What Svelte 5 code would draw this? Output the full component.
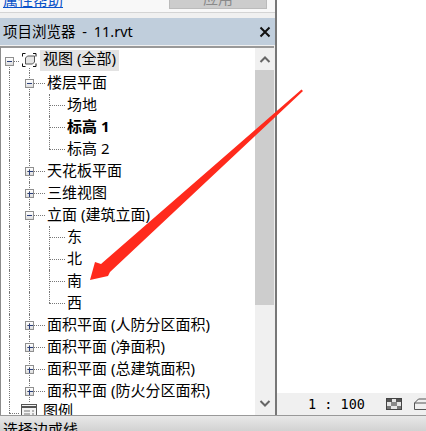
<script>
	const L = 'line', E = 'elbow', Z = 'end', M = 'minus', P = 'plus';
	const rows = [
		{ cells: [M], icon: 'view', label: '视图 (全部)', active: true, first: true },
		{ cells: [L, M], label: '楼层平面' },
		{ cells: [L, L, E], label: '场地' },
		{ cells: [L, L, E], label: '标高 1', bold: true },
		{ cells: [L, L, Z], label: '标高 2' },
		{ cells: [L, P], label: '天花板平面' },
		{ cells: [L, P], label: '三维视图' },
		{ cells: [L, M], label: '立面 (建筑立面)' },
		{ cells: [L, L, E], label: '东' },
		{ cells: [L, L, E], label: '北' },
		{ cells: [L, L, E], label: '南' },
		{ cells: [L, L, Z], label: '西' },
		{ cells: [L, P], label: '面积平面 (人防分区面积)' },
		{ cells: [L, P], label: '面积平面 (净面积)' },
		{ cells: [L, P], label: '面积平面 (总建筑面积)' },
		{ cells: [L, P], label: '面积平面 (防火分区面积)' },
		{ cells: [Z], icon: 'legend', label: '图例' }
	];
</script>

<div class="app">
	<div class="work">
		<section class="browser">
			<div class="props">
				<span class="help">属性帮助</span>
				<span class="apply"><span>应用</span></span>
			</div>
			<header class="title">
				<span class="name">项目浏览器 - 11.rvt</span>
				<svg class="close" width="12" height="12" viewBox="0 0 12 12">
					<path d="M1.500 1.500l9 9M10.500 1.500l-9 9" stroke="#111" stroke-width="2" fill="none" />
				</svg>
			</header>
			<div class="pane">
				<ul class="tree">
					{#each rows as row}
						<li class="row">
							{#each row.cells as c}
								<span class="cell {c}" class:first={row.first}>
									{#if c === M || c === P}
										<i class="box" class:plus={c === P}></i>
									{/if}
								</span>
							{/each}
							{#if row.icon === 'view'}
								<svg class="icon" width="20" height="20" viewBox="0 0 20 20" fill="none">
									<path d="M3.500 5.500v-3h3M14 2.500h3v3M17 12.500v3h-3M6.500 15.500h-3v-3" stroke="#111" />
									<path d="M6.500 7l2-2h7v6l-2 2h-7z" fill="#e6e6e6" stroke="#555" />
									<path d="M10.500 17v3" stroke="#777" stroke-dasharray="1 1" />
								</svg>
							{:else if row.icon === 'legend'}
								<svg class="icon" width="20" height="20" viewBox="0 0 20 20" fill="none">
									<rect x="2.500" y="1.500" width="15" height="15" fill="#f4f4f4" stroke="#555" />
									<path d="M3 4h14" stroke="#555" stroke-width="2" />
									<path d="M5 8h6M13 8h2M5 11h6M13 11h2" stroke="#777" />
								</svg>
							{/if}
							<span class="label" class:active={row.active} class:bold={row.bold} class:top={row.icon}>{row.label}</span>
						</li>
					{/each}
				</ul>
				<div class="scroll">
					<span class="arrow">
						<svg width="14" height="10" viewBox="0 0 14 10" fill="none">
							<path d="M2.500 8L7 3.500 11.500 8" stroke="#666" stroke-width="2" />
						</svg>
					</span>
					<span class="thumb"></span>
					<span class="track"></span>
					<span class="arrow">
						<svg width="14" height="10" viewBox="0 0 14 10" fill="none">
							<path d="M2.500 2L7 6.500 11.500 2" stroke="#666" stroke-width="2" />
						</svg>
					</span>
				</div>
			</div>
		</section>
		<section class="canvas">
			<div class="drawing"></div>
			<div class="viewbar">
				<span class="scale">1 : 100</span>
				<svg width="16" height="12" viewBox="0 0 16 12">
					<rect x="0.500" y="0.500" width="15" height="11" fill="#e4e4e4" stroke="#444" />
					<rect x="1" y="1" width="5" height="3" fill="#555" />
					<rect x="10" y="1" width="5" height="3" fill="#555" />
					<rect x="5" y="4" width="6" height="4" fill="#888" />
					<rect x="1" y="8" width="4" height="3" fill="#777" />
					<rect x="11" y="8" width="4" height="3" fill="#777" />
				</svg>
				<svg class="cube" width="16" height="12" viewBox="0 0 16 12" fill="none">
					<path d="M0.500 11.500V5l4-4h11M0.500 5H16M0.500 11.500H16" stroke="#555" />
				</svg>
			</div>
		</section>
	</div>
	<footer class="status">选择边或线</footer>
	<svg class="pointer" width="426" height="431" viewBox="0 0 426 431">
		<path d="M301.500 89.500L303 91 110 272 108 276 90 280 95 262 101 264z" fill="#ff2a1c" />
	</svg>
</div>

<style>
	:global(body) {
		margin: 0;
		background: #fff;
	}
	.app {
		position: relative;
		display: flex;
		flex-direction: column;
		width: 426px;
		height: 431px;
		overflow: hidden;
		font-family: "Noto Sans", "Noto Sans CJK SC", sans-serif;
		color: #000;
	}
	.work {
		display: flex;
		height: 415px;
		flex: none;
	}
	.browser {
		display: flex;
		flex-direction: column;
		width: 279px;
		background: #f0f0f0;
	}
	.props {
		display: flex;
		justify-content: space-between;
		height: 12px;
		padding: 0 8px 0 3px;
		background: #f8f8f8;
		border-bottom: 1px solid #d4d4d4;
		overflow: hidden;
		flex: none;
	}
	.help {
		height: 20px;
		margin-top: -10px;
		font-size: 15px;
		line-height: 20px;
		color: #0a52c8;
		text-decoration: underline;
	}
	.apply {
		width: 98px;
		height: 9px;
		background: #ccc;
		border: 1px solid #bbb;
		border-top: 0;
		box-sizing: border-box;
		font-size: 15px;
		line-height: 0;
		color: #8a8a8a;
		text-align: center;
		overflow: hidden;
	}
	.apply span {
		display: block;
		margin-top: -2px;
	}
	.title {
		display: flex;
		align-items: center;
		justify-content: space-between;
		width: 275px;
		height: 27px;
		margin-top: 5px;
		padding: 0 4px 0 3px;
		box-sizing: border-box;
		background: #c0cedc;
		font-size: 14.500px;
		word-spacing: 3px;
		flex: none;
	}
	.name {
		margin-bottom: 2px;
	}
	.pane {
		display: flex;
		flex: 1;
		width: 274px;
		min-height: 0;
		margin-top: 1px;
		border-top: 2px solid #999;
		border-left: 1px solid #8c8c8c;
		box-sizing: border-box;
		background: #fff;
	}
	.tree {
		flex: 1;
		min-width: 0;
		margin: 0;
		padding: 2px 0 0;
		list-style: none;
		overflow: hidden;
	}
	.row {
		display: flex;
		align-items: center;
		height: 22px;
		margin-left: -1px;
		font-size: 15px;
		white-space: nowrap;
	}
	.cell {
		position: relative;
		width: 20px;
		height: 22px;
		flex: none;
	}
	.line::before,
	.elbow::before,
	.end::before,
	.minus::before,
	.plus::before {
		content: "";
		position: absolute;
		left: 9px;
		top: 0;
		bottom: 0;
		border-left: 1px dotted #777;
	}
	.end::before {
		bottom: 11px;
	}
	.first::before {
		top: 11px;
	}
	.elbow::after,
	.end::after,
	.minus::after,
	.plus::after {
		content: "";
		position: absolute;
		left: 9px;
		top: 11px;
		width: 16px;
		border-top: 1px dotted #777;
	}
	.box {
		position: absolute;
		left: 5px;
		top: 7px;
		width: 9px;
		height: 9px;
		box-sizing: border-box;
		border: 1px solid #8f8f8f;
		background: linear-gradient(#fff, #ddd);
		z-index: 1;
	}
	.box::before {
		content: "";
		position: absolute;
		left: 1px;
		top: 3px;
		width: 5px;
		height: 1px;
		background: #2b3f7a;
	}
	.box.plus::after {
		content: "";
		position: absolute;
		left: 3px;
		top: 1px;
		width: 1px;
		height: 5px;
		background: #2b3f7a;
	}
	.icon {
		position: relative;
		flex: none;
		margin-left: -1px;
		margin-right: 1px;
		background: #fff;
	}
	.label {
		margin-left: 7px;
		margin-bottom: 3px;
		line-height: 20px;
	}
	.label.top {
		margin: 0 0 1px;
		padding: 0 3px 4px;
		line-height: 17px;
	}
	.active {
		background: #e3e3e3;
	}
	.bold {
		font-weight: 700;
	}
	.scroll {
		display: flex;
		flex-direction: column;
		width: 19px;
		flex: none;
		background: #f0f0f0;
	}
	.arrow {
		display: flex;
		align-items: center;
		justify-content: center;
		height: 22px;
		flex: none;
	}
	.thumb {
		height: 235px;
		background: #cdcdcd;
		flex: none;
	}
	.track {
		flex: 1;
	}
	.canvas {
		display: flex;
		flex-direction: column;
		flex: 1;
		border-left: 2px solid #777;
	}
	.drawing {
		flex: 1;
		background: #fff;
	}
	.viewbar {
		display: flex;
		align-items: center;
		height: 22px;
		padding-left: 31px;
		background: #f0f0f0;
		font-family: "DejaVu Sans Mono", monospace;
		font-size: 13.500px;
	}
	.scale {
		width: 78px;
		white-space: pre;
	}
	.cube {
		margin-left: 12px;
	}
	.status {
		flex: 1;
		border-top: 1px solid #999;
		padding-left: 3px;
		background: linear-gradient(#e8e8e8, #d2d2d2);
		font-size: 15px;
		line-height: 26px;
		overflow: hidden;
	}
	.pointer {
		position: absolute;
		left: 0;
		top: 0;
		pointer-events: none;
	}
</style>
